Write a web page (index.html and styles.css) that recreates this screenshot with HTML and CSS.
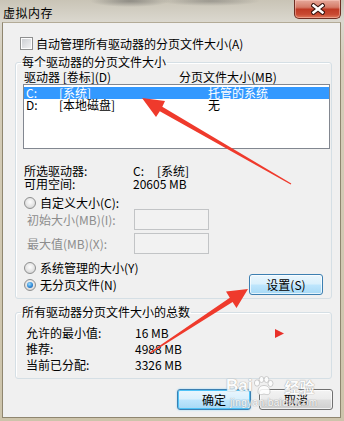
FILE: index.html
```html
<!DOCTYPE html>
<html>
<head>
    <meta charset="utf-8">
    <title>虚拟内存</title>
    <link rel="stylesheet" href="styles.css">
</head>
<body>
    <div class="window">
        <div class="titlebar">
            <span class="title">虚拟内存</span>
            <div class="close">
                <svg width="14" height="12" viewBox="-7 -6 14 12">
                    <path d="M-4.5 -3.5 L4.5 3.5 M4.5 -3.5 L-4.5 3.5" stroke="#3a1510" stroke-width="4.6" stroke-linecap="square"/>
                    <path d="M-4.5 -3.5 L4.5 3.5 M4.5 -3.5 L-4.5 3.5" stroke="#ffffff" stroke-width="2.4" stroke-linecap="square"/>
                </svg>
            </div>
        </div>

        <div class="client">
            <div class="check-row">
                <span class="checkbox"></span>
                <span>自动管理所有驱动器的分页文件大小(A)</span>
            </div>

            <fieldset class="group group-drives">
                <legend>每个驱动器的分页文件大小</legend>
                <div class="list-head">
                    <span class="col-drive">驱动器 [卷标](D)</span>
                    <span>分页文件大小(MB)</span>
                </div>
                <div class="listbox">
                    <div class="list-row selected">
                        <span class="c1">C:</span><span class="c2">[系统]</span><span>托管的系统</span>
                    </div>
                    <div class="list-row">
                        <span class="c1">D:</span><span class="c2">[本地磁盘]</span><span>无</span>
                    </div>
                </div>

                <div class="info">
                    <div class="kv"><span class="key">所选驱动器:</span><span><span class="drive">C:</span>[系统]</span></div>
                    <div class="kv"><span class="key">可用空间:</span><span>20605 MB</span></div>
                </div>

                <div class="radio-row custom">
                    <span class="radio"></span><span>自定义大小(C):</span>
                </div>
                <div class="size-row">
                    <span class="size-label">初始大小(MB)(I):</span>
                    <span class="textbox"></span>
                </div>
                <div class="size-row second">
                    <span class="size-label">最大值(MB)(X):</span>
                    <span class="textbox"></span>
                </div>
                <div class="radio-row managed">
                    <span class="radio"></span><span>系统管理的大小(Y)</span>
                </div>
                <div class="set-row">
                    <div class="radio-row">
                        <span class="radio checked"></span><span>无分页文件(N)</span>
                    </div>
                    <button class="btn btn-blue">设置(S)</button>
                </div>
            </fieldset>

            <fieldset class="group group-total">
                <legend>所有驱动器分页文件大小的总数</legend>
                <div class="total-row"><span class="key">允许的最小值:</span><span>16 MB</span></div>
                <div class="total-row"><span class="key">推荐:</span><span>4988 MB</span></div>
                <div class="total-row"><span class="key">当前已分配:</span><span>3326 MB</span></div>
            </fieldset>

            <div class="dialog-buttons">
                <button class="btn btn-blue btn-default">确定</button>
                <button class="btn">取消</button>
            </div>
        </div>

        <div class="watermark">
            <div class="wm-top">
                <span class="wm-bai">Bai</span>
                <svg width="22" height="20" viewBox="0 0 22 20">
                    <g fill="#ffffff" stroke="#b9b9b9" stroke-width="0.8">
                        <ellipse cx="5" cy="7" rx="2.6" ry="3.2"/>
                        <ellipse cx="9.5" cy="3.5" rx="2.4" ry="3"/>
                        <ellipse cx="14.5" cy="3.5" rx="2.4" ry="3"/>
                        <ellipse cx="18.5" cy="7.5" rx="2.5" ry="3.1"/>
                        <path d="M6 16 C6 11 9 9.5 12 9.5 C15 9.5 18 11 18 16 C18 19 15 19 12 18 C9 19 6 19 6 16 Z"/>
                    </g>
                </svg>
                <span class="wm-jy">经验</span>
            </div>
            <div class="wm-url">jingyan.baidu.com</div>
        </div>

        <svg class="marks" width="344" height="421" viewBox="0 0 344 421">
            <polygon fill="#ef3a2c" points="142,98 165,101 162.3,106.8 291.3,183.6 290.7,184.4 159.8,111.2 156,117"/>
            <polygon fill="#ef3a2c" points="248,289 226,291.5 229.8,297.8 149.7,352.6 150.3,353.4 232.6,302 236.5,308"/>
            <polygon fill="#e8302a" points="275,329 284,333.5 275,338"/>
        </svg>
    </div>
</body>
</html>
```

FILE: styles.css
```css
* {
    box-sizing: border-box;
}
body {
    margin: 0;
    font-family: "Noto Sans CJK SC", "Liberation Sans", sans-serif;
    font-size: 12px;
    color: #000;
    background: #cfc7b1;
}
.window {
    position: relative;
    width: 344px;
    height: 421px;
    display: flex;
    flex-direction: column;
    overflow: hidden;
    background:
        radial-gradient(ellipse 40px 6px at 130px 1px, rgba(70, 70, 70, 0.45), transparent),
        radial-gradient(ellipse 50px 5px at 210px 1px, rgba(70, 70, 70, 0.35), transparent),
        linear-gradient(to bottom, #c9c4b6 0, #dbd8cf 22px, #d5cdb9 60px, #cdc4ab 100%);
}
.titlebar {
    height: 22px;
    display: flex;
    justify-content: space-between;
    align-items: flex-start;
    padding-left: 3px;
}
.title {
    margin-top: 6px;
    line-height: 14px;
    letter-spacing: 0.5px;
}
.close {
    width: 47px;
    height: 19px;
    margin-right: 3px;
    display: flex;
    align-items: center;
    justify-content: center;
    border: 1px solid #6e2d22;
    border-top: none;
    border-radius: 0 0 5px 5px;
    background: linear-gradient(to bottom, #e6a99b 0, #d57b68 40%, #bf3a24 52%, #c94a32 80%, #de7a5c 100%);
    box-shadow: inset 0 0 0 1px rgba(255, 210, 200, 0.45);
}
.client {
    flex: 1;
    margin: 0 3px 3px 2px;
    padding: 0 8px 0 12px;
    display: flex;
    flex-direction: column;
    border: 1px solid #8f866f;
    border-top-color: #b3ab97;
    background: #f0f0f0;
}

/* checkbox */
.check-row {
    display: flex;
    align-items: center;
    height: 13px;
    margin: 14px 0 0 5px;
    line-height: 13px;
}
.checkbox {
    width: 13px;
    height: 13px;
    margin-right: 3px;
    border: 1px solid #8e8f8f;
    background: linear-gradient(135deg, #c9ccd0, #f4f4f5);
    box-shadow: inset 0 0 0 1px #fdfdfd;
}

/* group boxes */
.group {
    margin: 0;
    min-width: 0;
    border: 1px solid #d5dfe5;
    border-radius: 3px;
    box-shadow: inset 1px 1px 0 #fff;
}
.group legend {
    padding: 0 1px;
    margin-left: -2px;
    line-height: 14px;
}
.group-drives {
    margin-top: 5px;
    padding: 1px 1px 3px 7px;
}
.group-total {
    margin-top: 6px;
    padding: 6px 1px 5px 7px;
}

.list-head {
    display: flex;
    height: 14px;
    line-height: 14px;
    padding-left: 1px;
}
.col-drive {
    width: 155px;
}
.listbox {
    height: 65px;
    padding-top: 2px;
    border: 1px solid #828790;
    background: #fff;
}
.list-row {
    display: flex;
    height: 12px;
    line-height: 12px;
    padding-left: 2px;
}
.list-row.selected {
    background: #3399ff;
    color: #fff;
}
.c1 {
    width: 33px;
}
.c2 {
    width: 149px;
}

.info {
    margin-top: 15px;
}
.kv {
    display: flex;
    height: 13px;
    line-height: 13px;
    padding-left: 1px;
}
.key {
    width: 109px;
}
.drive {
    display: inline-block;
    width: 24px;
}

/* radios */
.radio-row {
    display: flex;
    align-items: center;
    height: 12px;
    line-height: 12px;
    padding-left: 1px;
}
.radio-row.custom {
    margin-top: 7px;
}
.radio-row.managed {
    margin-top: 8px;
}
.radio {
    position: relative;
    width: 12px;
    height: 12px;
    margin-right: 4px;
    border-radius: 50%;
    border: 1px solid #8e8f8f;
    background: radial-gradient(circle at 50% 40%, #fdfdfd 0, #e4e4e4 55%, #c8c8c8 100%);
}
.radio.checked::after {
    content: "";
    position: absolute;
    left: 2px;
    top: 2px;
    width: 6px;
    height: 6px;
    border-radius: 50%;
    background: radial-gradient(circle at 40% 35%, #9fdcfb 0, #2f8ad8 55%, #1a4f99 100%);
}

.size-row {
    display: flex;
    align-items: center;
    height: 21px;
}
.size-row.second {
    margin-top: 3px;
}
.size-label {
    width: 111px;
    padding-left: 4px;
    color: #8d8d8d;
}
.textbox {
    width: 75px;
    height: 21px;
    border: 1px solid #c2c4c6;
    background: #f2f2f2;
}

.set-row {
    display: flex;
    justify-content: space-between;
    align-items: center;
    height: 21px;
}

/* buttons */
.btn {
    width: 74px;
    height: 21px;
    padding: 0;
    font: inherit;
    font-size: 12px;
    line-height: 19px;
    color: #000;
    border: 1px solid #707070;
    border-radius: 3px;
    background: linear-gradient(to bottom, #f3f3f3 0, #ebebeb 48%, #dddddd 52%, #cfcfcf 100%);
    box-shadow: inset 0 0 0 1px rgba(255, 255, 255, 0.7);
}
.btn-blue {
    border-color: #3c7fb1;
    background: linear-gradient(to bottom, #eaf6fd 0, #d9f0fc 48%, #bee6fd 52%, #a7d9f5 100%);
}
.set-row .btn {
    margin-right: 7px;
}
.btn-default {
    box-shadow: inset 0 0 0 1px #4fc3f7, 0 0 2px #8fd3f5;
}

.total-row {
    display: flex;
    height: 16px;
    line-height: 16px;
    padding-left: 3px;
}

.dialog-buttons {
    display: flex;
    justify-content: flex-end;
    gap: 8px;
    margin: 10px -1px 0 0;
}

/* overlays: baidu watermark and red arrows */
.watermark {
    position: absolute;
    left: 226px;
    top: 375px;
    color: #fff;
    opacity: 0.85;
    text-shadow: 0 0 1px #9a9a9a, 0 0 1px #9a9a9a;
}
.wm-top {
    display: flex;
    align-items: center;
    height: 22px;
}
.wm-bai {
    font-family: "Liberation Sans", sans-serif;
    font-weight: bold;
    font-size: 17px;
}
.wm-jy {
    margin-left: 10px;
    font-size: 15px;
    font-weight: bold;
}
.wm-url {
    margin: 0 0 0 4px;
    font-family: "Liberation Sans", sans-serif;
    font-size: 10px;
    line-height: 11px;
    letter-spacing: 0.4px;
}
.marks {
    position: absolute;
    left: 0;
    top: 0;
    pointer-events: none;
}
```
